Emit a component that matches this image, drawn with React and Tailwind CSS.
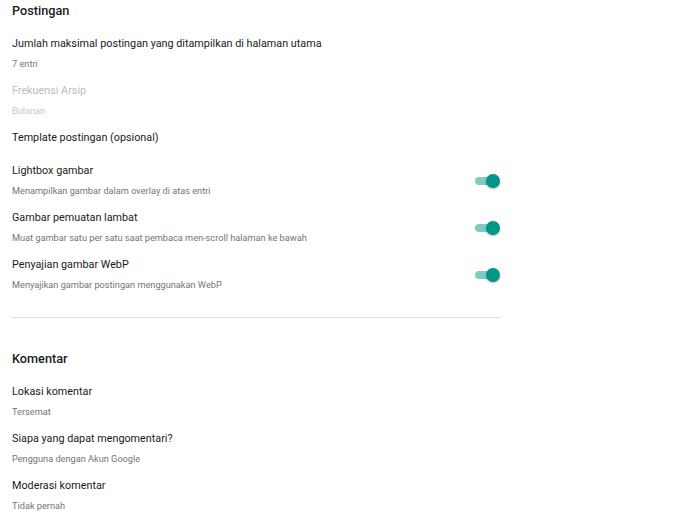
const Toggle = () => (
  <div className="relative flex h-[14px] w-[26px] shrink-0 items-center">
    <div className="ml-[1px] h-[8px] w-[22px] rounded-full bg-[#80cbc4]" />
    <div className="absolute right-0 top-0 h-[14px] w-[14px] rounded-full bg-[#009688] shadow-[0_1px_2px_rgba(0,0,0,0.3)]" />
  </div>
);

const Item = ({ title, sub, disabled, toggle, className = "" }) => (
  <div className={`flex items-center justify-between ${className}`}>
    <div>
      <div
        className={`text-[10.8px] leading-[16px] ${
          disabled ? "text-[#bdbdbd]" : "text-[#1a1a1a]"
        }`}
      >
        {title}
      </div>
      {sub && (
        <div
          className={`mt-[5px] text-[9.2px] leading-[14px] ${
            disabled ? "text-[#c8c8c8]" : "text-[#757575]"
          }`}
        >
          {sub}
        </div>
      )}
    </div>
    {toggle && <Toggle />}
  </div>
);

const Section = ({ title, children }) => (
  <div>
    <h2 className="text-[12.7px] font-medium leading-[20px] text-[#212121]">
      {title}
    </h2>
    <div className="mt-[15px] flex flex-col gap-[12px]">{children}</div>
  </div>
);

export default function App() {
  return (
    <div
      className="min-h-[525px] w-[683px] bg-white pl-[12px] pt-[1px]"
      style={{ fontFamily: "Roboto, 'Open Sans', sans-serif" }}
    >
      <div className="w-[488px]">
        <Section title="Postingan">
          <Item
            title="Jumlah maksimal postingan yang ditampilkan di halaman utama"
            sub="7 entri"
          />
          <Item title="Frekuensi Arsip" sub="Bulanan" disabled />
          <Item title="Template postingan (opsional)" className="mb-[5px]" />
          <Item
            title="Lightbox gambar"
            sub="Menampilkan gambar dalam overlay di atas entri"
            toggle
          />
          <Item
            title="Gambar pemuatan lambat"
            sub="Muat gambar satu per satu saat pembaca men-scroll halaman ke bawah"
            toggle
          />
          <Item
            title="Penyajian gambar WebP"
            sub="Menyajikan gambar postingan menggunakan WebP"
            toggle
          />
        </Section>

        {/* divider between sections */}
        <div className="mt-[25px] mb-[31px] h-px bg-[#e0e0e0]" />

        <Section title="Komentar">
          <Item title="Lokasi komentar" sub="Tersemat" />
          <Item
            title="Siapa yang dapat mengomentari?"
            sub="Pengguna dengan Akun Google"
          />
          <Item title="Moderasi komentar" sub="Tidak pernah" />
        </Section>
      </div>
    </div>
  );
}
